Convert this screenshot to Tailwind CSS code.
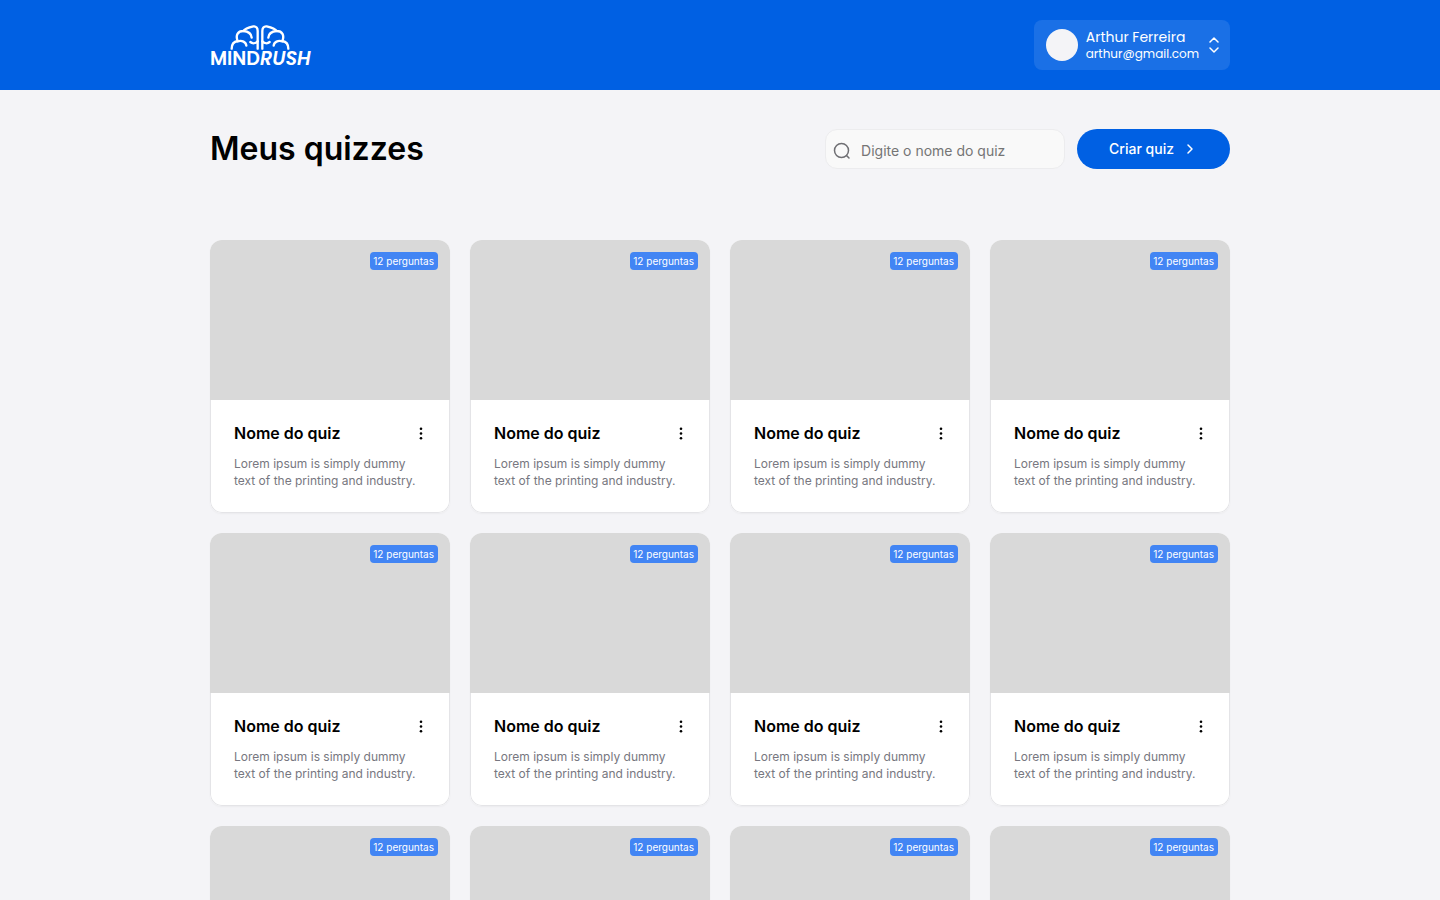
<!DOCTYPE html>
<html lang="pt-BR">
<head>
<meta charset="utf-8">
<meta name="viewport" content="width=device-width, initial-scale=1">
<title>MindRush - Meus quizzes</title>
<script src="https://cdn.jsdelivr.net/npm/@tailwindcss/browser@4"></script>
</head>
<body class="bg-[#f4f4f7] font-['Inter',sans-serif] text-black">
<header class="bg-[#0060e3] px-5 py-5">
  <div class="mx-auto flex max-w-[1020px] items-center justify-between">
    <a href="#" aria-label="MindRush" class="flex flex-col items-center pt-[3px] text-white">
      <svg class="h-[25px] w-[60px]" viewBox="0 0 180 75" fill="none" stroke="currentColor" stroke-width="7" stroke-linecap="round" stroke-linejoin="round" aria-hidden="true">
        <g id="half">
          <path d="M5 71C5 58 12 50 23 48C16 31 23 18 40 18C45 10 57 7 70 4C79 3 83 9 83 18V71"/>
          <path d="M23 49C36 45 48 51 49 62M40 18C54 19 64 26 65 38M61 51C68 57 77 55 83 49"/>
        </g>
        <use href="#half" transform="matrix(-1 0 0 1 180 0)"/>
      </svg>
      <span class="font-['Poppins','Inter',sans-serif] text-[19px] leading-[18px] font-semibold">MIND<i>RUSH</i></span>
    </a>
    <button type="button" class="flex h-[50px] items-center rounded-lg bg-[#1a70e6] pr-2 pl-3 text-left text-white">
      <span class="mr-2 size-8 rounded-full bg-[#f4f4f7]"></span>
      <span class="flex flex-col font-['Poppins','Inter',sans-serif]">
        <span class="text-sm leading-[18px]">Arthur Ferreira</span>
        <span class="text-xs leading-4">arthur@gmail.com</span>
      </span>
      <svg class="ml-[7px] size-4" viewBox="0 0 16 16" fill="none" stroke="currentColor" stroke-width="1.5" stroke-linecap="round" stroke-linejoin="round" aria-hidden="true"><path d="m4 5 4-4 4 4M4 11l4 4 4-4"/></svg>
    </button>
  </div>
</header>
<main class="mx-auto max-w-[1060px] px-5 pt-[39px]">
  <div class="mb-[71px] flex items-center justify-between">
    <h1 class="text-[32px] leading-10 font-semibold">Meus quizzes</h1>
    <div class="flex gap-3">
      <label class="flex h-10 w-60 items-center gap-2.5 rounded-xl border border-[#ececee] bg-[#f9f9f9] px-[7px] pt-[3px] text-[#6f6f73]">
        <svg class="size-[18px] shrink-0" viewBox="0 0 18 18" fill="none" stroke="currentColor" stroke-width="1.5" stroke-linecap="round" aria-hidden="true"><circle cx="8.5" cy="8.5" r="7"/><path d="m13.5 13.5 2.5 2.5"/></svg>
        <input type="text" aria-label="Nome do quiz" placeholder="Digite o nome do quiz" class="min-w-0 flex-1 bg-transparent text-sm outline-none placeholder:text-[#757575]">
      </label>
      <button type="button" class="flex h-10 items-center gap-2 rounded-full bg-[#0060e3] px-8 text-sm font-medium text-white">Criar quiz
        <svg class="size-4" viewBox="0 0 16 16" fill="none" stroke="currentColor" stroke-width="1.5" stroke-linecap="round" stroke-linejoin="round" aria-hidden="true"><path d="m6 4 4 4-4 4"/></svg>
      </button>
    </div>
  </div>
  <section id="quizzes" aria-label="Quizzes" class="grid grid-cols-4 gap-5"></section>
</main>
<template id="quiz-card">
  <article class="overflow-hidden rounded-xl bg-white shadow-[0_1px_2px_rgba(0,0,0,0.04)]">
    <div class="flex h-40 items-start justify-end bg-[#d9d9d9] p-3">
      <span class="rounded bg-[#4285f4] pr-1 pl-[3px] text-[10px] leading-[18px] text-white">12 perguntas</span>
    </div>
    <div class="rounded-b-xl border-x border-b border-[#e4e4e7] px-[23px] pt-6 pb-[23px]">
      <div class="mb-3 flex items-center justify-between">
        <h2 class="text-base leading-[19px] font-semibold">Nome do quiz</h2>
        <button type="button" aria-label="Opções do quiz" class="size-4">
          <svg class="size-4" viewBox="0 0 16 16" fill="currentColor" aria-hidden="true"><circle cx="11" cy="2.7" r="1.3"/><circle cx="11" cy="7.5" r="1.3"/><circle cx="11" cy="12.3" r="1.3"/></svg>
        </button>
      </div>
      <p class="text-xs leading-[17px] text-[#777780]">Lorem ipsum is simply dummy text of the printing and industry.</p>
    </div>
  </article>
</template>
<script>
  const list = document.getElementById('quizzes');
  const card = document.getElementById('quiz-card');
  for (let i = 0; i < 12; i++) list.append(card.content.cloneNode(true));
</script>
</body>
</html>
